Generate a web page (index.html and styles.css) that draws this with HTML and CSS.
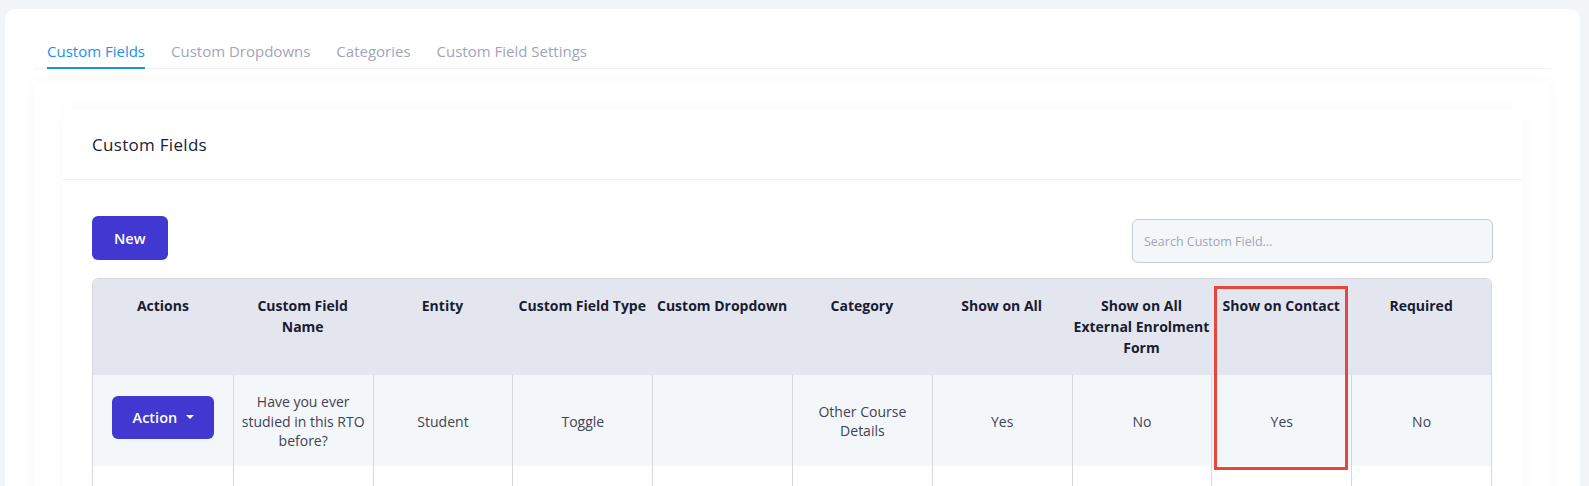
FILE: index.html
```html
<!DOCTYPE html>
<html lang="en">
<head>
  <meta charset="UTF-8">
  <title>Custom Fields</title>
  <meta name="viewport" content="width=device-width, initial-scale=1.0">
  <link rel="stylesheet" href="styles.css">
</head>
<body>
  <div class="panel">
    <ul class="tabs">
      <li class="tab active">Custom Fields</li>
      <li class="tab">Custom Dropdowns</li>
      <li class="tab">Categories</li>
      <li class="tab">Custom Field Settings</li>
    </ul>

    <div class="wrap">
      <div class="card">
        <div class="card-header">
          <h3>Custom Fields</h3>
        </div>

        <div class="card-body">
          <div class="toolbar">
            <button class="btn">New</button>
            <input class="search" type="text" placeholder="Search Custom Field...">
          </div>

          <div class="table-wrap">
            <table class="grid">
              <thead>
                <tr>
                  <th>Actions</th>
                  <th>Custom Field<br>Name</th>
                  <th>Entity</th>
                  <th>Custom Field Type</th>
                  <th>Custom Dropdown</th>
                  <th>Category</th>
                  <th>Show on All</th>
                  <th>Show on All<br>External Enrolment<br>Form</th>
                  <th>Show on Contact</th>
                  <th>Required</th>
                </tr>
              </thead>
              <tbody>
                <tr>
                  <td><button class="btn btn-action">Action <span class="caret"></span></button></td>
                  <td>Have you ever<br>studied in this RTO<br>before?</td>
                  <td>Student</td>
                  <td>Toggle</td>
                  <td></td>
                  <td>Other Course<br>Details</td>
                  <td>Yes</td>
                  <td>No</td>
                  <td>Yes</td>
                  <td>No</td>
                </tr>
                <tr class="blank">
                  <td></td><td></td><td></td><td></td><td></td>
                  <td></td><td></td><td></td><td></td><td></td>
                </tr>
              </tbody>
            </table>
            <div class="highlight"></div>
          </div>
        </div>
      </div>
    </div>
  </div>
</body>
</html>
```

FILE: styles.css
```css
:root {
  --page-bg: #f2f5f8;
  --primary: #4038d0;
  --blue: #1e8ff0;
  --muted: #a1a5b7;
  --dark: #181c32;
  --text: #3f4254;
  --line: #eff2f5;
  --grid-line: #d6d8de;
  --head-bg: #e4e6ef;
  --row-bg: #f4f7fa;
  --card-shadow: 0 0 20px rgba(82, 63, 105, 0.03);
}

html {
  overflow: hidden;
}

body {
  margin: 0;
  padding: 9px 9px 0 5px;
  background: var(--page-bg);
  font-family: 'Open Sans', sans-serif;
  color: var(--text);
}

.panel {
  background: white;
  border-radius: 10px;
  padding: 22px 29px 40px;
}

.tabs {
  display: flex;
  list-style: none;
  margin: 0;
  padding: 0;
  border-bottom: 1px solid var(--line);
}

.tab {
  margin: 0 13px -1px;
  padding: 10px 0 5px;
  font-size: 15px;
  line-height: 21px;
  color: var(--muted);
  border-bottom: 2px solid transparent;
}

.tab.active {
  color: var(--blue);
  border-bottom-color: var(--blue);
}

.wrap {
  margin-top: 12px;
  padding: 29px 29px 40px;
  border-radius: 14px;
  box-shadow: var(--card-shadow);
}

.card {
  border-radius: 12px;
  box-shadow: var(--card-shadow);
}

.card-header {
  display: flex;
  align-items: center;
  height: 69px;
  padding: 0 29px;
  border-bottom: 1px solid var(--line);
}

.card-header h3 {
  margin: 0;
  font-size: 17px;
  font-weight: 500;
  letter-spacing: 0.3px;
  color: var(--dark);
}

.card-body {
  padding: 36px 30px 40px 29px;
}

.toolbar {
  display: flex;
  justify-content: space-between;
  align-items: flex-start;
}

.btn {
  display: inline-flex;
  align-items: center;
  justify-content: center;
  height: 44px;
  padding: 0 22px;
  border: 0;
  border-radius: 6px;
  background: var(--primary);
  color: white;
  font-family: inherit;
  font-size: 14.5px;
  font-weight: 600;
}

.search {
  box-sizing: border-box;
  width: 361px;
  height: 44px;
  margin: 3px -1px 0 0;
  padding: 0 11px;
  border: 1px solid #c9cad8;
  border-radius: 6px;
  background: #f4f7fa;
  font-family: inherit;
  font-size: 12.5px;
  color: var(--text);
}

.search::placeholder {
  color: var(--muted);
}

.table-wrap {
  position: relative;
  margin-top: 15px;
}

.grid {
  width: 100%;
  table-layout: fixed;
  border-collapse: separate;
  border-spacing: 0;
  border: 1px solid var(--grid-line);
  border-bottom: 0;
  border-radius: 6px 6px 0 0;
  overflow: hidden;
}

.grid th {
  padding: 16px 1px 17px;
  background: var(--head-bg);
  vertical-align: top;
  font-size: 14px;
  font-weight: 700;
  line-height: 21px;
  color: var(--dark);
}

.grid td {
  padding: 17px 4px 15px;
  background: var(--row-bg);
  border-left: 1px solid var(--grid-line);
  text-align: center;
  vertical-align: middle;
  font-size: 14px;
  line-height: 19.5px;
}

.grid td:first-child {
  border-left: 0;
}

.grid .blank td {
  height: 40px;
  background: white;
}

.btn-action {
  height: 43px;
  margin-top: -8px;
  padding: 0 20px 0 21px;
}

.caret {
  width: 0;
  height: 0;
  margin-left: 9px;
  border-top: 4px solid white;
  border-left: 4px solid transparent;
  border-right: 4px solid transparent;
}

/* red annotation around the "Show on Contact" column */
.highlight {
  position: absolute;
  left: 1122px;
  top: 8px;
  width: 128px;
  height: 178px;
  border: 3px solid #e5473f;
}
```
